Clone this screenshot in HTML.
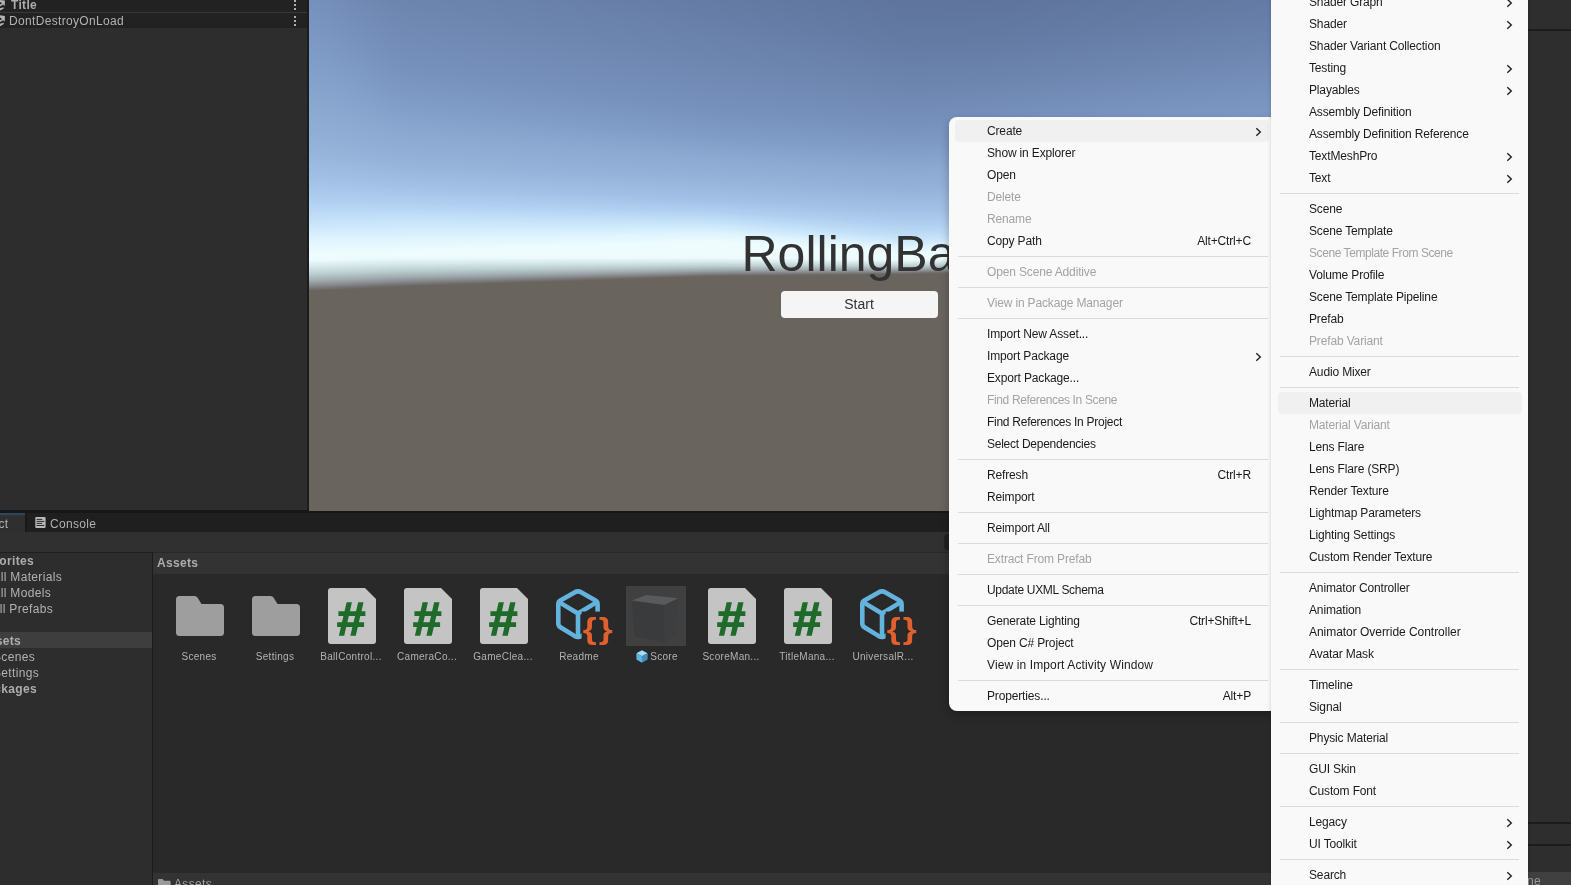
<!DOCTYPE html>
<html lang="en">
<head>
<meta charset="utf-8">
<title>Unity Editor - Create Material</title>
<style>
*{box-sizing:border-box;margin:0;padding:0}
html,body{width:1571px;height:885px;overflow:hidden;background:#2d2d2d;font-family:"Liberation Sans",sans-serif;}
#root{position:relative;width:1571px;height:885px;overflow:hidden;background:#2d2d2d;will-change:transform}
.abs{position:absolute}
.ut{position:absolute;white-space:nowrap;color:#b2b2b2;font-size:12px;line-height:16px;height:16px;letter-spacing:0.33px}
.utb{font-weight:bold;color:#adadad}
.rt{text-align:right;left:-200px}
#hier{left:0;top:0;width:308px;height:511px;background:#2d2d2d}
#band{left:0;top:510px;width:1571px;height:3px;background:#171717;z-index:0}
#game{left:309px;top:0;width:1219px;height:511px;overflow:hidden;background:#6a645f;z-index:1}
#sky{left:-100px;top:-60px;width:1300px;height:680px;transform-origin:100px 349px;transform:rotate(-1.3deg);
 background:linear-gradient(180deg,#6480ab 60px,#6f8ab5 110px,#7f9ac2 160px,#93afd6 210px,#a4c0e4 240px,#c3e0f7 280px,#e0f4fd 305px,#f5fdff 321px,#eff7f9 330px,#c9d4d8 337px,#8f9496 343px,#706b68 348px,#6a645f 353px,#69635e 680px)}
#title{left:432.5px;top:226px;font-size:50px;line-height:56px;color:#323232;white-space:nowrap}
#startbtn{left:471.5px;top:290.5px;width:157px;height:27px;background:#f5f5f5;border-radius:4px;text-align:center;font-size:14px;line-height:27px;color:#323232}
#tabbar{left:0;top:513px;width:1571px;height:19px;background:#1f1f1f}
#toolbar{left:0;top:532px;width:1571px;height:20px;background:#303030}
#ptree{left:0;top:552px;width:152px;height:333px;background:#2d2d2d;overflow:hidden}
#pgrid{left:153px;top:552px;width:1375px;height:333px;background:#292929;overflow:hidden}
#insp{z-index:2;left:1527px;top:0;width:44px;height:885px;background:#2e2e2e}
.menu{position:absolute;z-index:10;box-shadow:0 4px 10px rgba(0,0,0,0.28);background:#f9f9f9;color:#1b1b1b;font-size:12px;letter-spacing:-0.15px}
.m2{box-shadow:0 0 4px rgba(0,0,0,0.18)}
.mi{position:absolute;left:0;right:0;height:22px;line-height:23px;white-space:nowrap}
.mi .l{position:absolute;top:0}
.mi .r{position:absolute;top:0;text-align:right}
.dis{color:#a3a3a3}
.sep{position:absolute;height:1px;background:#dadada}
.hl{position:absolute;background:#f0f0f0;border-radius:4px}
.chev{position:absolute}
.lbl{position:absolute;white-space:nowrap;color:#b2b2b2;font-size:10px;line-height:14px;text-align:center;width:76px;letter-spacing:0.3px}
</style>
</head>
<body>
<div id="root">

<div id="hier" class="abs">
  <div class="abs" style="left:0;top:0;width:308px;height:12px;background:#222"></div>
  <div class="abs" style="left:0;top:12px;width:308px;height:1px;background:#383838"></div>
  <div class="abs" style="left:0;top:13px;width:308px;height:15px;background:#222"></div>
  <div class="ut utb" style="left:11px;top:-3px">Title</div>
  <div class="ut" style="left:9px;top:13px">DontDestroyOnLoad</div>
  <svg class="abs" style="left:0;top:0" width="6" height="28" viewBox="0 0 6 28"><g fill="#b4b4b4">
    <path d="M0,0 L4.9,0.6 L4.7,6.2 L3.3,4.6 L0,6.4 L0,4.6 L2.2,3.3 L0,2 Z"/><path d="M0,8.2 L3.6,7.2 L3.9,8.4 L0,10.6 Z"/>
    <path d="M0,15.2 L4.9,15.9 L4.7,21.8 L3.3,20.2 L0,22 L0,20.2 L2.2,18.9 L0,17.6 Z"/><path d="M0,23.8 L3.6,22.8 L3.9,24 L0,26.2 Z"/></g></svg>
  <div class="abs" style="left:294px;top:0px;width:2px;height:2px;background:#b0b0b0"></div><div class="abs" style="left:294px;top:4px;width:2px;height:2px;background:#b0b0b0"></div><div class="abs" style="left:294px;top:8px;width:2px;height:2px;background:#b0b0b0"></div><div class="abs" style="left:294px;top:16px;width:2px;height:2px;background:#b0b0b0"></div><div class="abs" style="left:294px;top:20px;width:2px;height:2px;background:#b0b0b0"></div><div class="abs" style="left:294px;top:24px;width:2px;height:2px;background:#b0b0b0"></div>
  <div class="abs" style="left:307px;top:0;width:2px;height:511px;background:#1c1c1c"></div>
</div>

<div id="game" class="abs">
  <svg width="0" height="0" style="position:absolute"><filter id="hb" x="0" y="0" width="100%" height="100%" color-interpolation-filters="sRGB"><feGaussianBlur stdDeviation="9 0"/></filter></svg>
  <div class="abs" style="left:-48px;top:0;width:1315px;height:320px;filter:url(#hb)">
  <div class="abs" style="left:0px;top:0;width:16px;height:320px;background:linear-gradient(180.00deg,#5a6f96 -330.0px,#5e749c -230.0px,#647ba4 -130.0px,#6c85af -60.0px,#7691bc 0.0px,#809dc7 58.0px,#8caad2 116.0px,#96b3da 150.5px,#a3c1e6 180.5px,#b0cff0 200.5px,#c4e1f9 220.5px,#e0f5fe 240.5px,#eefcfe 254.8px,#edfbfc 260.3px,#d7e8eb 266.8px,#becfd2 273.8px,#a0acaf 280.8px,#878a8c 285.8px,#706c6a 289.8px,#6a645f 291.3px)"></div>
<div class="abs" style="left:16px;top:0;width:16px;height:320px;background:linear-gradient(180.00deg,#5a6f96 -330.0px,#5e749c -230.0px,#647ba4 -130.0px,#6c85af -60.0px,#7691bc 0.0px,#809dc7 58.0px,#8caad2 116.0px,#96b3da 150.5px,#a3c1e6 180.5px,#b0cff0 200.5px,#c4e1f9 220.5px,#e0f5fe 240.5px,#eefcfe 254.8px,#edfbfc 260.3px,#d7e8eb 266.8px,#becfd2 273.8px,#a0acaf 280.8px,#878a8c 285.8px,#706c6a 289.8px,#6a645f 291.3px)"></div>
<div class="abs" style="left:32px;top:0;width:16px;height:320px;background:linear-gradient(180.00deg,#5a6f96 -330.0px,#5e749c -230.0px,#647ba4 -130.0px,#6c85af -60.0px,#7691bc 0.0px,#809dc7 58.0px,#8caad2 116.0px,#96b3da 150.5px,#a3c1e6 180.5px,#b0cff0 200.5px,#c4e1f9 220.5px,#e0f5fe 240.5px,#eefcfe 254.8px,#edfbfc 260.3px,#d7e8eb 266.8px,#becfd2 273.8px,#a0acaf 280.8px,#878a8c 285.8px,#706c6a 289.8px,#6a645f 291.3px)"></div>
<div class="abs" style="left:48px;top:0;width:16px;height:320px;background:linear-gradient(177.14deg,#5a6f96 -323.0px,#5e749c -223.8px,#647ba4 -125.3px,#6c85af -55.3px,#7691bc 5.3px,#809dc7 61.7px,#8caad2 117.7px,#96b3da 151.6px,#a3c1e6 181.0px,#b0cff0 200.7px,#c4e1f9 220.3px,#e0f5fe 240.5px,#eefcfe 254.6px,#edfbfc 260.1px,#d7e8eb 266.6px,#becfd2 273.5px,#a0acaf 280.5px,#878a8c 285.5px,#706c6a 289.5px,#6a645f 290.9px)"></div>
<div class="abs" style="left:64px;top:0;width:16px;height:320px;background:linear-gradient(177.14deg,#5a6f96 -307.0px,#5e749c -209.6px,#647ba4 -114.7px,#6c85af -44.7px,#7691bc 17.4px,#809dc7 70.0px,#8caad2 121.6px,#96b3da 154.2px,#a3c1e6 182.2px,#b0cff0 201.1px,#c4e1f9 219.9px,#e0f5fe 240.4px,#eefcfe 254.1px,#edfbfc 259.6px,#d7e8eb 266.1px,#becfd2 273.0px,#a0acaf 279.8px,#878a8c 284.8px,#706c6a 288.7px,#6a645f 290.2px)"></div>
<div class="abs" style="left:80px;top:0;width:16px;height:320px;background:linear-gradient(177.14deg,#5a6f96 -291.0px,#5e749c -195.3px,#647ba4 -104.0px,#6c85af -34.0px,#7691bc 29.5px,#809dc7 78.4px,#8caad2 125.5px,#96b3da 156.8px,#a3c1e6 183.3px,#b0cff0 201.6px,#c4e1f9 219.4px,#e0f5fe 240.3px,#eefcfe 253.6px,#edfbfc 259.1px,#d7e8eb 265.6px,#becfd2 272.4px,#a0acaf 279.2px,#878a8c 284.0px,#706c6a 287.9px,#6a645f 289.4px)"></div>
<div class="abs" style="left:96px;top:0;width:16px;height:320px;background:linear-gradient(177.14deg,#5a6f96 -275.0px,#5e749c -181.1px,#647ba4 -93.3px,#6c85af -23.3px,#7691bc 41.6px,#809dc7 86.7px,#8caad2 129.4px,#96b3da 159.4px,#a3c1e6 184.5px,#b0cff0 202.0px,#c4e1f9 219.0px,#e0f5fe 240.2px,#eefcfe 253.1px,#edfbfc 258.6px,#d7e8eb 265.1px,#becfd2 271.8px,#a0acaf 278.5px,#878a8c 283.3px,#706c6a 287.1px,#6a645f 288.6px)"></div>
<div class="abs" style="left:112px;top:0;width:16px;height:320px;background:linear-gradient(177.14deg,#5a6f96 -259.0px,#5e749c -166.9px,#647ba4 -82.7px,#6c85af -12.7px,#7691bc 53.6px,#809dc7 95.1px,#8caad2 133.4px,#96b3da 161.9px,#a3c1e6 185.6px,#b0cff0 202.5px,#c4e1f9 218.5px,#e0f5fe 240.1px,#eefcfe 252.6px,#edfbfc 258.1px,#d7e8eb 264.6px,#becfd2 271.2px,#a0acaf 277.8px,#878a8c 282.6px,#706c6a 286.3px,#6a645f 287.8px)"></div>
<div class="abs" style="left:128px;top:0;width:16px;height:320px;background:linear-gradient(177.14deg,#5a6f96 -243.0px,#5e749c -152.7px,#647ba4 -72.0px,#6c85af -2.0px,#7691bc 65.7px,#809dc7 103.4px,#8caad2 137.3px,#96b3da 164.5px,#a3c1e6 186.8px,#b0cff0 202.9px,#c4e1f9 218.1px,#e0f5fe 240.0px,#eefcfe 252.1px,#edfbfc 257.6px,#d7e8eb 264.1px,#becfd2 270.6px,#a0acaf 277.1px,#878a8c 281.8px,#706c6a 285.5px,#6a645f 286.9px)"></div>
<div class="abs" style="left:144px;top:0;width:16px;height:320px;background:linear-gradient(178.18deg,#5a6f96 -235.0px,#5e749c -146.3px,#647ba4 -67.1px,#6c85af 2.3px,#7691bc 69.7px,#809dc7 106.4px,#8caad2 138.9px,#96b3da 165.7px,#a3c1e6 187.6px,#b0cff0 203.4px,#c4e1f9 218.1px,#e0f5fe 239.8px,#eefcfe 251.6px,#edfbfc 257.5px,#d7e8eb 263.9px,#becfd2 270.3px,#a0acaf 276.7px,#878a8c 281.3px,#706c6a 285.0px,#6a645f 286.4px)"></div>
<div class="abs" style="left:160px;top:0;width:16px;height:320px;background:linear-gradient(178.18deg,#5a6f96 -229.0px,#5e749c -141.7px,#647ba4 -63.6px,#6c85af 5.1px,#7691bc 71.9px,#809dc7 108.0px,#8caad2 140.0px,#96b3da 166.5px,#a3c1e6 188.3px,#b0cff0 203.8px,#c4e1f9 218.3px,#e0f5fe 239.4px,#eefcfe 251.1px,#edfbfc 257.5px,#d7e8eb 263.8px,#becfd2 270.1px,#a0acaf 276.4px,#878a8c 280.9px,#706c6a 284.5px,#6a645f 285.9px)"></div>
<div class="abs" style="left:176px;top:0;width:16px;height:320px;background:linear-gradient(178.18deg,#5a6f96 -222.9px,#5e749c -137.1px,#647ba4 -60.0px,#6c85af 7.9px,#7691bc 74.0px,#809dc7 109.7px,#8caad2 141.1px,#96b3da 167.3px,#a3c1e6 189.0px,#b0cff0 204.2px,#c4e1f9 218.5px,#e0f5fe 239.1px,#eefcfe 250.6px,#edfbfc 257.6px,#d7e8eb 263.7px,#becfd2 269.9px,#a0acaf 276.0px,#878a8c 280.5px,#706c6a 284.0px,#6a645f 285.4px)"></div>
<div class="abs" style="left:192px;top:0;width:16px;height:320px;background:linear-gradient(178.18deg,#5a6f96 -216.8px,#5e749c -132.6px,#647ba4 -56.4px,#6c85af 10.7px,#7691bc 76.1px,#809dc7 111.4px,#8caad2 142.3px,#96b3da 168.1px,#a3c1e6 189.7px,#b0cff0 204.6px,#c4e1f9 218.7px,#e0f5fe 238.8px,#eefcfe 250.1px,#edfbfc 257.6px,#d7e8eb 263.6px,#becfd2 269.6px,#a0acaf 275.6px,#878a8c 280.0px,#706c6a 283.5px,#6a645f 284.9px)"></div>
<div class="abs" style="left:208px;top:0;width:16px;height:320px;background:linear-gradient(178.18deg,#5a6f96 -210.7px,#5e749c -128.0px,#647ba4 -52.9px,#6c85af 13.4px,#7691bc 78.3px,#809dc7 113.1px,#8caad2 143.4px,#96b3da 168.9px,#a3c1e6 190.4px,#b0cff0 205.1px,#c4e1f9 218.9px,#e0f5fe 238.5px,#eefcfe 249.6px,#edfbfc 257.6px,#d7e8eb 263.5px,#becfd2 269.4px,#a0acaf 275.3px,#878a8c 279.6px,#706c6a 283.0px,#6a645f 284.4px)"></div>
<div class="abs" style="left:224px;top:0;width:16px;height:320px;background:linear-gradient(178.18deg,#5a6f96 -204.6px,#5e749c -123.4px,#647ba4 -49.3px,#6c85af 16.2px,#7691bc 80.4px,#809dc7 114.7px,#8caad2 144.5px,#96b3da 169.7px,#a3c1e6 191.1px,#b0cff0 205.5px,#c4e1f9 219.1px,#e0f5fe 238.2px,#eefcfe 249.0px,#edfbfc 257.6px,#d7e8eb 263.4px,#becfd2 269.2px,#a0acaf 274.9px,#878a8c 279.1px,#706c6a 282.5px,#6a645f 283.8px)"></div>
<div class="abs" style="left:240px;top:0;width:16px;height:320px;background:linear-gradient(178.18deg,#5a6f96 -198.5px,#5e749c -118.9px,#647ba4 -45.8px,#6c85af 19.0px,#7691bc 82.5px,#809dc7 116.4px,#8caad2 145.6px,#96b3da 170.5px,#a3c1e6 191.8px,#b0cff0 205.9px,#c4e1f9 219.2px,#e0f5fe 237.9px,#eefcfe 248.5px,#edfbfc 257.7px,#d7e8eb 263.3px,#becfd2 268.9px,#a0acaf 274.6px,#878a8c 278.7px,#706c6a 282.0px,#6a645f 283.3px)"></div>
<div class="abs" style="left:256px;top:0;width:16px;height:320px;background:linear-gradient(178.18deg,#5a6f96 -192.4px,#5e749c -114.3px,#647ba4 -42.2px,#6c85af 21.8px,#7691bc 84.7px,#809dc7 118.1px,#8caad2 146.7px,#96b3da 171.3px,#a3c1e6 192.6px,#b0cff0 206.4px,#c4e1f9 219.4px,#e0f5fe 237.6px,#eefcfe 248.0px,#edfbfc 257.7px,#d7e8eb 263.2px,#becfd2 268.7px,#a0acaf 274.2px,#878a8c 278.2px,#706c6a 281.5px,#6a645f 282.8px)"></div>
<div class="abs" style="left:272px;top:0;width:16px;height:320px;background:linear-gradient(178.18deg,#5a6f96 -186.3px,#5e749c -109.7px,#647ba4 -38.7px,#6c85af 24.6px,#7691bc 86.8px,#809dc7 119.8px,#8caad2 147.8px,#96b3da 172.2px,#a3c1e6 193.3px,#b0cff0 206.8px,#c4e1f9 219.6px,#e0f5fe 237.3px,#eefcfe 247.5px,#edfbfc 257.7px,#d7e8eb 263.1px,#becfd2 268.5px,#a0acaf 273.9px,#878a8c 277.8px,#706c6a 281.0px,#6a645f 282.3px)"></div>
<div class="abs" style="left:288px;top:0;width:16px;height:320px;background:linear-gradient(178.18deg,#5a6f96 -180.2px,#5e749c -105.1px,#647ba4 -35.1px,#6c85af 27.4px,#7691bc 88.9px,#809dc7 121.4px,#8caad2 149.0px,#96b3da 173.0px,#a3c1e6 194.0px,#b0cff0 207.2px,#c4e1f9 219.8px,#e0f5fe 237.0px,#eefcfe 247.0px,#edfbfc 257.7px,#d7e8eb 263.0px,#becfd2 268.3px,#a0acaf 273.5px,#878a8c 277.4px,#706c6a 280.5px,#6a645f 281.8px)"></div>
<div class="abs" style="left:304px;top:0;width:16px;height:320px;background:linear-gradient(178.18deg,#5a6f96 -174.1px,#5e749c -100.6px,#647ba4 -31.6px,#6c85af 30.2px,#7691bc 91.1px,#809dc7 123.1px,#8caad2 150.1px,#96b3da 173.8px,#a3c1e6 194.7px,#b0cff0 207.7px,#c4e1f9 220.0px,#e0f5fe 236.7px,#eefcfe 246.5px,#edfbfc 257.8px,#d7e8eb 262.9px,#becfd2 268.0px,#a0acaf 273.2px,#878a8c 276.9px,#706c6a 280.0px,#6a645f 281.3px)"></div>
<div class="abs" style="left:320px;top:0;width:16px;height:320px;background:linear-gradient(178.18deg,#5a6f96 -168.0px,#5e749c -96.0px,#647ba4 -28.0px,#6c85af 33.0px,#7691bc 93.2px,#809dc7 124.8px,#8caad2 151.2px,#96b3da 174.6px,#a3c1e6 195.4px,#b0cff0 208.1px,#c4e1f9 220.2px,#e0f5fe 236.4px,#eefcfe 246.0px,#edfbfc 257.8px,#d7e8eb 262.8px,#becfd2 267.8px,#a0acaf 272.8px,#878a8c 276.5px,#706c6a 279.5px,#6a645f 280.8px)"></div>
<div class="abs" style="left:336px;top:0;width:16px;height:320px;background:linear-gradient(178.18deg,#5a6f96 -161.9px,#5e749c -91.4px,#647ba4 -24.4px,#6c85af 35.8px,#7691bc 95.3px,#809dc7 126.5px,#8caad2 152.3px,#96b3da 175.4px,#a3c1e6 196.1px,#b0cff0 208.5px,#c4e1f9 220.3px,#e0f5fe 236.1px,#eefcfe 245.5px,#edfbfc 257.8px,#d7e8eb 262.7px,#becfd2 267.6px,#a0acaf 272.4px,#878a8c 276.0px,#706c6a 279.0px,#6a645f 280.3px)"></div>
<div class="abs" style="left:352px;top:0;width:16px;height:320px;background:linear-gradient(178.18deg,#5a6f96 -155.8px,#5e749c -86.9px,#647ba4 -20.9px,#6c85af 38.6px,#7691bc 97.5px,#809dc7 128.2px,#8caad2 153.4px,#96b3da 176.2px,#a3c1e6 196.8px,#b0cff0 209.0px,#c4e1f9 220.5px,#e0f5fe 235.8px,#eefcfe 245.0px,#edfbfc 257.9px,#d7e8eb 262.6px,#becfd2 267.3px,#a0acaf 272.1px,#878a8c 275.6px,#706c6a 278.5px,#6a645f 279.8px)"></div>
<div class="abs" style="left:368px;top:0;width:16px;height:320px;background:linear-gradient(178.18deg,#5a6f96 -149.7px,#5e749c -82.3px,#647ba4 -17.3px,#6c85af 41.4px,#7691bc 99.6px,#809dc7 129.8px,#8caad2 154.6px,#96b3da 177.0px,#a3c1e6 197.5px,#b0cff0 209.4px,#c4e1f9 220.7px,#e0f5fe 235.5px,#eefcfe 244.5px,#edfbfc 257.9px,#d7e8eb 262.5px,#becfd2 267.1px,#a0acaf 271.7px,#878a8c 275.2px,#706c6a 278.0px,#6a645f 279.3px)"></div>
<div class="abs" style="left:384px;top:0;width:16px;height:320px;background:linear-gradient(178.18deg,#5a6f96 -143.6px,#5e749c -77.7px,#647ba4 -13.8px,#6c85af 44.2px,#7691bc 101.7px,#809dc7 131.5px,#8caad2 155.7px,#96b3da 177.9px,#a3c1e6 198.2px,#b0cff0 209.8px,#c4e1f9 220.9px,#e0f5fe 235.2px,#eefcfe 244.0px,#edfbfc 257.9px,#d7e8eb 262.4px,#becfd2 266.9px,#a0acaf 271.4px,#878a8c 274.7px,#706c6a 277.4px,#6a645f 278.8px)"></div>
<div class="abs" style="left:400px;top:0;width:16px;height:320px;background:linear-gradient(178.18deg,#5a6f96 -137.5px,#5e749c -73.1px,#647ba4 -10.2px,#6c85af 47.0px,#7691bc 103.9px,#809dc7 133.2px,#8caad2 156.8px,#96b3da 178.7px,#a3c1e6 199.0px,#b0cff0 210.3px,#c4e1f9 221.1px,#e0f5fe 234.9px,#eefcfe 243.5px,#edfbfc 257.9px,#d7e8eb 262.3px,#becfd2 266.7px,#a0acaf 271.0px,#878a8c 274.3px,#706c6a 276.9px,#6a645f 278.3px)"></div>
<div class="abs" style="left:416px;top:0;width:16px;height:320px;background:linear-gradient(178.18deg,#5a6f96 -131.4px,#5e749c -68.6px,#647ba4 -6.7px,#6c85af 49.8px,#7691bc 106.0px,#809dc7 134.9px,#8caad2 157.9px,#96b3da 179.5px,#a3c1e6 199.7px,#b0cff0 210.7px,#c4e1f9 221.3px,#e0f5fe 234.6px,#eefcfe 243.0px,#edfbfc 258.0px,#d7e8eb 262.2px,#becfd2 266.4px,#a0acaf 270.7px,#878a8c 273.8px,#706c6a 276.4px,#6a645f 277.8px)"></div>
<div class="abs" style="left:432px;top:0;width:16px;height:320px;background:linear-gradient(178.18deg,#5a6f96 -125.3px,#5e749c -64.0px,#647ba4 -3.1px,#6c85af 52.6px,#7691bc 108.1px,#809dc7 136.5px,#8caad2 159.0px,#96b3da 180.3px,#a3c1e6 200.4px,#b0cff0 211.1px,#c4e1f9 221.4px,#e0f5fe 234.3px,#eefcfe 242.4px,#edfbfc 258.0px,#d7e8eb 262.1px,#becfd2 266.2px,#a0acaf 270.3px,#878a8c 273.4px,#706c6a 275.9px,#6a645f 277.2px)"></div>
<div class="abs" style="left:448px;top:0;width:16px;height:320px;background:linear-gradient(179.38deg,#5a6f96 -119.3px,#5e749c -59.4px,#647ba4 0.5px,#6c85af 55.3px,#7691bc 110.2px,#809dc7 138.1px,#8caad2 160.1px,#96b3da 181.1px,#a3c1e6 201.1px,#b0cff0 211.6px,#c4e1f9 221.8px,#e0f5fe 234.1px,#eefcfe 242.1px,#edfbfc 258.0px,#d7e8eb 262.0px,#becfd2 266.0px,#a0acaf 270.0px,#878a8c 273.0px,#706c6a 275.5px,#6a645f 276.8px)"></div>
<div class="abs" style="left:464px;top:0;width:16px;height:320px;background:linear-gradient(179.38deg,#5a6f96 -113.5px,#5e749c -54.5px,#647ba4 4.2px,#6c85af 57.8px,#7691bc 111.4px,#809dc7 139.1px,#8caad2 161.1px,#96b3da 182.0px,#a3c1e6 201.9px,#b0cff0 212.7px,#c4e1f9 223.1px,#e0f5fe 235.3px,#eefcfe 243.1px,#edfbfc 258.2px,#d7e8eb 262.1px,#becfd2 266.0px,#a0acaf 269.9px,#878a8c 272.9px,#706c6a 275.3px,#6a645f 276.6px)"></div>
<div class="abs" style="left:480px;top:0;width:16px;height:320px;background:linear-gradient(179.38deg,#5a6f96 -107.8px,#5e749c -49.5px,#647ba4 7.8px,#6c85af 60.2px,#7691bc 112.6px,#809dc7 140.1px,#8caad2 162.1px,#96b3da 182.9px,#a3c1e6 202.7px,#b0cff0 213.9px,#c4e1f9 224.5px,#e0f5fe 236.4px,#eefcfe 244.1px,#edfbfc 258.3px,#d7e8eb 262.2px,#becfd2 266.0px,#a0acaf 269.8px,#878a8c 272.7px,#706c6a 275.2px,#6a645f 276.4px)"></div>
<div class="abs" style="left:496px;top:0;width:16px;height:320px;background:linear-gradient(179.38deg,#5a6f96 -102.1px,#5e749c -44.6px,#647ba4 11.5px,#6c85af 62.7px,#7691bc 113.8px,#809dc7 141.1px,#8caad2 163.1px,#96b3da 183.8px,#a3c1e6 203.6px,#b0cff0 215.0px,#c4e1f9 225.8px,#e0f5fe 237.6px,#eefcfe 245.1px,#edfbfc 258.5px,#d7e8eb 262.3px,#becfd2 266.0px,#a0acaf 269.7px,#878a8c 272.6px,#706c6a 275.0px,#6a645f 276.3px)"></div>
<div class="abs" style="left:512px;top:0;width:16px;height:320px;background:linear-gradient(179.38deg,#5a6f96 -96.3px,#5e749c -39.7px,#647ba4 15.2px,#6c85af 65.2px,#7691bc 115.1px,#809dc7 142.1px,#8caad2 164.1px,#96b3da 184.7px,#a3c1e6 204.4px,#b0cff0 216.1px,#c4e1f9 227.2px,#e0f5fe 238.7px,#eefcfe 246.1px,#edfbfc 258.7px,#d7e8eb 262.3px,#becfd2 266.0px,#a0acaf 269.7px,#878a8c 272.5px,#706c6a 274.8px,#6a645f 276.1px)"></div>
<div class="abs" style="left:528px;top:0;width:16px;height:320px;background:linear-gradient(179.38deg,#5a6f96 -90.6px,#5e749c -34.8px,#647ba4 18.9px,#6c85af 67.6px,#7691bc 116.3px,#809dc7 143.0px,#8caad2 165.0px,#96b3da 185.6px,#a3c1e6 205.2px,#b0cff0 217.2px,#c4e1f9 228.5px,#e0f5fe 239.9px,#eefcfe 247.0px,#edfbfc 258.8px,#d7e8eb 262.4px,#becfd2 266.0px,#a0acaf 269.6px,#878a8c 272.4px,#706c6a 274.7px,#6a645f 275.9px)"></div>
<div class="abs" style="left:544px;top:0;width:16px;height:320px;background:linear-gradient(179.38deg,#5a6f96 -84.8px,#5e749c -29.8px,#647ba4 22.6px,#6c85af 70.1px,#7691bc 117.5px,#809dc7 144.0px,#8caad2 166.0px,#96b3da 186.5px,#a3c1e6 206.0px,#b0cff0 218.3px,#c4e1f9 229.8px,#e0f5fe 241.0px,#eefcfe 248.0px,#edfbfc 259.0px,#d7e8eb 262.5px,#becfd2 266.0px,#a0acaf 269.5px,#878a8c 272.2px,#706c6a 274.5px,#6a645f 275.7px)"></div>
<div class="abs" style="left:560px;top:0;width:16px;height:320px;background:linear-gradient(179.38deg,#5a6f96 -79.1px,#5e749c -24.9px,#647ba4 26.3px,#6c85af 72.5px,#7691bc 118.8px,#809dc7 145.0px,#8caad2 167.0px,#96b3da 187.4px,#a3c1e6 206.8px,#b0cff0 219.4px,#c4e1f9 231.2px,#e0f5fe 242.2px,#eefcfe 249.0px,#edfbfc 259.2px,#d7e8eb 262.6px,#becfd2 266.0px,#a0acaf 269.4px,#878a8c 272.1px,#706c6a 274.3px,#6a645f 275.6px)"></div>
<div class="abs" style="left:576px;top:0;width:16px;height:320px;background:linear-gradient(179.38deg,#5a6f96 -73.3px,#5e749c -20.0px,#647ba4 30.0px,#6c85af 75.0px,#7691bc 120.0px,#809dc7 146.0px,#8caad2 168.0px,#96b3da 188.3px,#a3c1e6 207.7px,#b0cff0 220.5px,#c4e1f9 232.5px,#e0f5fe 243.3px,#eefcfe 250.0px,#edfbfc 259.3px,#d7e8eb 262.7px,#becfd2 266.0px,#a0acaf 269.3px,#878a8c 272.0px,#706c6a 274.2px,#6a645f 275.4px)"></div>
<div class="abs" style="left:592px;top:0;width:16px;height:320px;background:linear-gradient(179.38deg,#5a6f96 -67.6px,#5e749c -15.1px,#647ba4 33.7px,#6c85af 77.5px,#7691bc 121.2px,#809dc7 147.0px,#8caad2 169.0px,#96b3da 189.2px,#a3c1e6 208.5px,#b0cff0 221.6px,#c4e1f9 233.9px,#e0f5fe 244.5px,#eefcfe 251.0px,#edfbfc 259.5px,#d7e8eb 262.7px,#becfd2 266.0px,#a0acaf 269.3px,#878a8c 271.9px,#706c6a 274.0px,#6a645f 275.2px)"></div>
<div class="abs" style="left:608px;top:0;width:16px;height:320px;background:linear-gradient(179.38deg,#5a6f96 -61.8px,#5e749c -10.2px,#647ba4 37.4px,#6c85af 79.9px,#7691bc 122.5px,#809dc7 148.0px,#8caad2 170.0px,#96b3da 190.1px,#a3c1e6 209.3px,#b0cff0 222.7px,#c4e1f9 235.2px,#e0f5fe 245.6px,#eefcfe 252.0px,#edfbfc 259.7px,#d7e8eb 262.8px,#becfd2 266.0px,#a0acaf 269.2px,#878a8c 271.8px,#706c6a 273.8px,#6a645f 275.1px)"></div>
<div class="abs" style="left:624px;top:0;width:16px;height:320px;background:linear-gradient(179.38deg,#5a6f96 -56.1px,#5e749c -5.2px,#647ba4 41.1px,#6c85af 82.4px,#7691bc 123.7px,#809dc7 149.0px,#8caad2 171.0px,#96b3da 191.0px,#a3c1e6 210.1px,#b0cff0 223.8px,#c4e1f9 236.6px,#e0f5fe 246.8px,#eefcfe 253.0px,#edfbfc 259.8px,#d7e8eb 262.9px,#becfd2 266.0px,#a0acaf 269.1px,#878a8c 271.6px,#706c6a 273.7px,#6a645f 274.9px)"></div>
<div class="abs" style="left:640px;top:0;width:16px;height:320px;background:linear-gradient(179.35deg,#5a6f96 -50.4px,#5e749c -0.3px,#647ba4 44.8px,#6c85af 84.8px,#7691bc 124.9px,#809dc7 149.9px,#8caad2 171.9px,#96b3da 191.9px,#a3c1e6 210.9px,#b0cff0 224.9px,#c4e1f9 237.9px,#e0f5fe 247.9px,#eefcfe 253.9px,#edfbfc 260.0px,#d7e8eb 263.0px,#becfd2 266.0px,#a0acaf 269.0px,#878a8c 271.5px,#706c6a 273.5px,#6a645f 274.7px)"></div>
<div class="abs" style="left:656px;top:0;width:16px;height:320px;background:linear-gradient(179.24deg,#5a6f96 -50.0px,#5e749c 0.0px,#647ba4 44.2px,#6c85af 84.2px,#7691bc 123.5px,#809dc7 148.8px,#8caad2 171.0px,#96b3da 191.3px,#a3c1e6 210.5px,#b0cff0 224.5px,#c4e1f9 237.5px,#e0f5fe 247.5px,#eefcfe 253.5px,#edfbfc 259.5px,#d7e8eb 262.5px,#becfd2 265.5px,#a0acaf 268.5px,#878a8c 271.0px,#706c6a 273.0px,#6a645f 274.5px)"></div>
<div class="abs" style="left:672px;top:0;width:16px;height:320px;background:linear-gradient(179.24deg,#5a6f96 -50.0px,#5e749c 0.0px,#647ba4 43.3px,#6c85af 83.3px,#7691bc 121.9px,#809dc7 147.6px,#8caad2 169.9px,#96b3da 190.6px,#a3c1e6 210.0px,#b0cff0 224.0px,#c4e1f9 237.0px,#e0f5fe 247.0px,#eefcfe 253.0px,#edfbfc 259.0px,#d7e8eb 262.0px,#becfd2 265.0px,#a0acaf 268.0px,#878a8c 270.5px,#706c6a 272.5px,#6a645f 274.3px)"></div>
<div class="abs" style="left:688px;top:0;width:16px;height:320px;background:linear-gradient(179.24deg,#5a6f96 -50.0px,#5e749c 0.0px,#647ba4 42.4px,#6c85af 82.4px,#7691bc 120.3px,#809dc7 146.3px,#8caad2 168.9px,#96b3da 189.9px,#a3c1e6 209.4px,#b0cff0 223.4px,#c4e1f9 236.4px,#e0f5fe 246.4px,#eefcfe 252.4px,#edfbfc 258.4px,#d7e8eb 261.4px,#becfd2 264.4px,#a0acaf 267.4px,#878a8c 269.9px,#706c6a 271.9px,#6a645f 274.1px)"></div>
<div class="abs" style="left:704px;top:0;width:16px;height:320px;background:linear-gradient(179.24deg,#5a6f96 -50.0px,#5e749c 0.0px,#647ba4 41.5px,#6c85af 81.5px,#7691bc 118.7px,#809dc7 145.1px,#8caad2 167.8px,#96b3da 189.2px,#a3c1e6 208.9px,#b0cff0 222.9px,#c4e1f9 235.9px,#e0f5fe 245.9px,#eefcfe 251.9px,#edfbfc 257.9px,#d7e8eb 260.9px,#becfd2 263.9px,#a0acaf 266.9px,#878a8c 269.4px,#706c6a 271.4px,#6a645f 273.9px)"></div>
<div class="abs" style="left:720px;top:0;width:16px;height:320px;background:linear-gradient(179.24deg,#5a6f96 -50.0px,#5e749c 0.0px,#647ba4 40.6px,#6c85af 80.6px,#7691bc 117.1px,#809dc7 143.9px,#8caad2 166.7px,#96b3da 188.5px,#a3c1e6 208.4px,#b0cff0 222.4px,#c4e1f9 235.4px,#e0f5fe 245.4px,#eefcfe 251.4px,#edfbfc 257.4px,#d7e8eb 260.4px,#becfd2 263.4px,#a0acaf 266.4px,#878a8c 268.9px,#706c6a 270.9px,#6a645f 273.6px)"></div>
<div class="abs" style="left:736px;top:0;width:16px;height:320px;background:linear-gradient(179.37deg,#5a6f96 -50.9px,#5e749c -0.9px,#647ba4 39.3px,#6c85af 79.4px,#7691bc 115.5px,#809dc7 142.8px,#8caad2 165.9px,#96b3da 187.9px,#a3c1e6 207.9px,#b0cff0 221.9px,#c4e1f9 234.9px,#e0f5fe 244.9px,#eefcfe 250.9px,#edfbfc 256.9px,#d7e8eb 259.9px,#becfd2 262.9px,#a0acaf 265.9px,#878a8c 268.4px,#706c6a 270.4px,#6a645f 273.4px)"></div>
<div class="abs" style="left:752px;top:0;width:16px;height:320px;background:linear-gradient(179.37deg,#5a6f96 -53.9px,#5e749c -3.9px,#647ba4 36.9px,#6c85af 77.3px,#7691bc 113.8px,#809dc7 142.0px,#8caad2 165.5px,#96b3da 187.6px,#a3c1e6 207.6px,#b0cff0 221.6px,#c4e1f9 234.6px,#e0f5fe 244.6px,#eefcfe 250.6px,#edfbfc 256.6px,#d7e8eb 259.6px,#becfd2 262.6px,#a0acaf 265.6px,#878a8c 268.1px,#706c6a 270.1px,#6a645f 273.3px)"></div>
<div class="abs" style="left:768px;top:0;width:16px;height:320px;background:linear-gradient(179.37deg,#5a6f96 -56.8px,#5e749c -6.8px,#647ba4 34.5px,#6c85af 75.2px,#7691bc 112.2px,#809dc7 141.2px,#8caad2 165.2px,#96b3da 187.3px,#a3c1e6 207.3px,#b0cff0 221.3px,#c4e1f9 234.3px,#e0f5fe 244.3px,#eefcfe 250.3px,#edfbfc 256.3px,#d7e8eb 259.3px,#becfd2 262.3px,#a0acaf 265.3px,#878a8c 267.8px,#706c6a 269.8px,#6a645f 273.1px)"></div>
<div class="abs" style="left:784px;top:0;width:16px;height:320px;background:linear-gradient(179.37deg,#5a6f96 -59.8px,#5e749c -9.8px,#647ba4 32.2px,#6c85af 73.2px,#7691bc 110.5px,#809dc7 140.5px,#8caad2 164.8px,#96b3da 187.0px,#a3c1e6 207.0px,#b0cff0 221.0px,#c4e1f9 234.0px,#e0f5fe 244.0px,#eefcfe 250.0px,#edfbfc 256.0px,#d7e8eb 259.0px,#becfd2 262.0px,#a0acaf 265.0px,#878a8c 267.5px,#706c6a 269.5px,#6a645f 272.9px)"></div>
<div class="abs" style="left:800px;top:0;width:16px;height:320px;background:linear-gradient(179.37deg,#5a6f96 -62.7px,#5e749c -12.7px,#647ba4 29.8px,#6c85af 71.1px,#7691bc 108.9px,#809dc7 139.7px,#8caad2 164.5px,#96b3da 186.7px,#a3c1e6 206.7px,#b0cff0 220.7px,#c4e1f9 233.7px,#e0f5fe 243.7px,#eefcfe 249.7px,#edfbfc 255.7px,#d7e8eb 258.7px,#becfd2 261.7px,#a0acaf 264.7px,#878a8c 267.2px,#706c6a 269.2px,#6a645f 272.7px)"></div>
<div class="abs" style="left:816px;top:0;width:16px;height:320px;background:linear-gradient(179.37deg,#5a6f96 -65.7px,#5e749c -15.7px,#647ba4 27.5px,#6c85af 69.0px,#7691bc 107.2px,#809dc7 138.9px,#8caad2 164.1px,#96b3da 186.4px,#a3c1e6 206.4px,#b0cff0 220.4px,#c4e1f9 233.4px,#e0f5fe 243.4px,#eefcfe 249.4px,#edfbfc 255.4px,#d7e8eb 258.4px,#becfd2 261.4px,#a0acaf 264.4px,#878a8c 266.9px,#706c6a 268.9px,#6a645f 272.6px)"></div>
<div class="abs" style="left:832px;top:0;width:16px;height:320px;background:linear-gradient(179.37deg,#5a6f96 -68.6px,#5e749c -18.6px,#647ba4 25.1px,#6c85af 67.0px,#7691bc 105.6px,#809dc7 138.2px,#8caad2 163.8px,#96b3da 186.1px,#a3c1e6 206.1px,#b0cff0 220.1px,#c4e1f9 233.1px,#e0f5fe 243.1px,#eefcfe 249.1px,#edfbfc 255.1px,#d7e8eb 258.1px,#becfd2 261.1px,#a0acaf 264.1px,#878a8c 266.6px,#706c6a 268.6px,#6a645f 272.4px)"></div>
<div class="abs" style="left:848px;top:0;width:16px;height:320px;background:linear-gradient(179.37deg,#5a6f96 -71.6px,#5e749c -21.6px,#647ba4 22.7px,#6c85af 64.9px,#7691bc 103.9px,#809dc7 137.4px,#8caad2 163.4px,#96b3da 185.8px,#a3c1e6 205.8px,#b0cff0 219.8px,#c4e1f9 232.8px,#e0f5fe 242.8px,#eefcfe 248.8px,#edfbfc 254.8px,#d7e8eb 257.8px,#becfd2 260.8px,#a0acaf 263.8px,#878a8c 266.3px,#706c6a 268.3px,#6a645f 272.2px)"></div>
<div class="abs" style="left:864px;top:0;width:16px;height:320px;background:linear-gradient(179.37deg,#5a6f96 -74.5px,#5e749c -24.5px,#647ba4 20.4px,#6c85af 62.8px,#7691bc 102.3px,#809dc7 136.6px,#8caad2 163.1px,#96b3da 185.5px,#a3c1e6 205.5px,#b0cff0 219.5px,#c4e1f9 232.5px,#e0f5fe 242.5px,#eefcfe 248.5px,#edfbfc 254.5px,#d7e8eb 257.5px,#becfd2 260.5px,#a0acaf 263.5px,#878a8c 266.0px,#706c6a 268.0px,#6a645f 272.0px)"></div>
<div class="abs" style="left:880px;top:0;width:16px;height:320px;background:linear-gradient(179.37deg,#5a6f96 -77.5px,#5e749c -27.5px,#647ba4 18.0px,#6c85af 60.8px,#7691bc 100.6px,#809dc7 135.9px,#8caad2 162.7px,#96b3da 185.3px,#a3c1e6 205.3px,#b0cff0 219.3px,#c4e1f9 232.3px,#e0f5fe 242.3px,#eefcfe 248.3px,#edfbfc 254.3px,#d7e8eb 257.3px,#becfd2 260.3px,#a0acaf 263.3px,#878a8c 265.8px,#706c6a 267.8px,#6a645f 271.9px)"></div>
<div class="abs" style="left:896px;top:0;width:16px;height:320px;background:linear-gradient(179.37deg,#5a6f96 -80.4px,#5e749c -30.4px,#647ba4 15.6px,#6c85af 58.7px,#7691bc 99.0px,#809dc7 135.1px,#8caad2 162.3px,#96b3da 185.0px,#a3c1e6 205.0px,#b0cff0 219.0px,#c4e1f9 232.0px,#e0f5fe 242.0px,#eefcfe 248.0px,#edfbfc 254.0px,#d7e8eb 257.0px,#becfd2 260.0px,#a0acaf 263.0px,#878a8c 265.5px,#706c6a 267.5px,#6a645f 271.7px)"></div>
<div class="abs" style="left:912px;top:0;width:16px;height:320px;background:linear-gradient(179.37deg,#5a6f96 -83.4px,#5e749c -33.4px,#647ba4 13.3px,#6c85af 56.6px,#7691bc 97.3px,#809dc7 134.3px,#8caad2 162.0px,#96b3da 184.7px,#a3c1e6 204.7px,#b0cff0 218.7px,#c4e1f9 231.7px,#e0f5fe 241.7px,#eefcfe 247.7px,#edfbfc 253.7px,#d7e8eb 256.7px,#becfd2 259.7px,#a0acaf 262.7px,#878a8c 265.2px,#706c6a 267.2px,#6a645f 271.5px)"></div>
<div class="abs" style="left:928px;top:0;width:16px;height:320px;background:linear-gradient(179.37deg,#5a6f96 -86.3px,#5e749c -36.3px,#647ba4 10.9px,#6c85af 54.6px,#7691bc 95.6px,#809dc7 133.5px,#8caad2 161.6px,#96b3da 184.4px,#a3c1e6 204.4px,#b0cff0 218.4px,#c4e1f9 231.4px,#e0f5fe 241.4px,#eefcfe 247.4px,#edfbfc 253.4px,#d7e8eb 256.4px,#becfd2 259.4px,#a0acaf 262.4px,#878a8c 264.9px,#706c6a 266.9px,#6a645f 271.3px)"></div>
<div class="abs" style="left:944px;top:0;width:16px;height:320px;background:linear-gradient(179.37deg,#5a6f96 -89.3px,#5e749c -39.3px,#647ba4 8.6px,#6c85af 52.5px,#7691bc 94.0px,#809dc7 132.8px,#8caad2 161.3px,#96b3da 184.1px,#a3c1e6 204.1px,#b0cff0 218.1px,#c4e1f9 231.1px,#e0f5fe 241.1px,#eefcfe 247.1px,#edfbfc 253.1px,#d7e8eb 256.1px,#becfd2 259.1px,#a0acaf 262.1px,#878a8c 264.6px,#706c6a 266.6px,#6a645f 271.1px)"></div>
<div class="abs" style="left:960px;top:0;width:16px;height:320px;background:linear-gradient(179.37deg,#5a6f96 -92.3px,#5e749c -42.3px,#647ba4 6.2px,#6c85af 50.4px,#7691bc 92.3px,#809dc7 132.0px,#8caad2 160.9px,#96b3da 183.8px,#a3c1e6 203.8px,#b0cff0 217.8px,#c4e1f9 230.8px,#e0f5fe 240.8px,#eefcfe 246.8px,#edfbfc 252.8px,#d7e8eb 255.8px,#becfd2 258.8px,#a0acaf 261.8px,#878a8c 264.3px,#706c6a 266.3px,#6a645f 271.0px)"></div>
<div class="abs" style="left:976px;top:0;width:16px;height:320px;background:linear-gradient(179.37deg,#5a6f96 -95.2px,#5e749c -45.2px,#647ba4 3.8px,#6c85af 48.4px,#7691bc 90.7px,#809dc7 131.2px,#8caad2 160.6px,#96b3da 183.5px,#a3c1e6 203.5px,#b0cff0 217.5px,#c4e1f9 230.5px,#e0f5fe 240.5px,#eefcfe 246.5px,#edfbfc 252.5px,#d7e8eb 255.5px,#becfd2 258.5px,#a0acaf 261.5px,#878a8c 264.0px,#706c6a 266.0px,#6a645f 270.8px)"></div>
<div class="abs" style="left:992px;top:0;width:16px;height:320px;background:linear-gradient(179.37deg,#5a6f96 -98.2px,#5e749c -48.2px,#647ba4 1.5px,#6c85af 46.3px,#7691bc 89.0px,#809dc7 130.5px,#8caad2 160.2px,#96b3da 183.2px,#a3c1e6 203.2px,#b0cff0 217.2px,#c4e1f9 230.2px,#e0f5fe 240.2px,#eefcfe 246.2px,#edfbfc 252.2px,#d7e8eb 255.2px,#becfd2 258.2px,#a0acaf 261.2px,#878a8c 263.7px,#706c6a 265.7px,#6a645f 270.6px)"></div>
<div class="abs" style="left:1008px;top:0;width:16px;height:320px;background:linear-gradient(180.00deg,#5a6f96 -100.0px,#5e749c -50.0px,#647ba4 0.0px,#6c85af 45.0px,#7691bc 88.0px,#809dc7 130.0px,#8caad2 160.0px,#96b3da 183.0px,#a3c1e6 203.0px,#b0cff0 217.0px,#c4e1f9 230.0px,#e0f5fe 240.0px,#eefcfe 246.0px,#edfbfc 252.0px,#d7e8eb 255.0px,#becfd2 258.0px,#a0acaf 261.0px,#878a8c 263.5px,#706c6a 265.5px,#6a645f 270.5px)"></div>
<div class="abs" style="left:1024px;top:0;width:16px;height:320px;background:linear-gradient(180.00deg,#5a6f96 -100.0px,#5e749c -50.0px,#647ba4 0.0px,#6c85af 45.0px,#7691bc 88.0px,#809dc7 130.0px,#8caad2 160.0px,#96b3da 183.0px,#a3c1e6 203.0px,#b0cff0 217.0px,#c4e1f9 230.0px,#e0f5fe 240.0px,#eefcfe 246.0px,#edfbfc 252.0px,#d7e8eb 255.0px,#becfd2 258.0px,#a0acaf 261.0px,#878a8c 263.5px,#706c6a 265.5px,#6a645f 270.5px)"></div>
  </div>
  <div id="title" class="abs">RollingBall</div>
  <div id="startbtn" class="abs">Start</div>
</div>

<div id="band" class="abs"><div class="abs" style="left:0;top:1px;width:25px;height:2px;background:#0d1a26"></div></div>
<div id="tabbar" class="abs">
  <div class="abs" style="left:0;top:0;width:25px;height:19px;background:linear-gradient(180deg,#3a4c5d 0,#34404b 1.5px,#2f2f2f 3px)"></div>
  <div class="abs" style="left:25px;top:0;width:2px;height:19px;background:#191919"></div>
  <div class="ut rt" style="width:208.5px;top:3px">Project</div>
  <svg class="abs" style="left:34.5px;top:4px" width="11" height="11" viewBox="0 0 11 11"><rect x="0.3" y="0.1" width="10.3" height="10.8" rx="0.8" fill="#b8b8b8"/><g stroke="#1c1c1c" stroke-width="0.9"><path d="M1.6,2.4 H7.2 M1.6,4.4 H9.2 M1.6,6.4 H7.2 M1.6,8.5 H9.2"/></g></svg>
  <div class="ut" style="left:50px;top:3px">Console</div>
</div>
<div id="toolbar" class="abs"><div class="abs" style="left:944px;top:2px;width:6px;height:16px;background:#202020;border-radius:4px 0 0 4px"></div></div>
<div id="ptree" class="abs">
<div class="ut rt utb" style="width:234px;top:1px">Favorites</div>
<div class="ut rt" style="width:262px;top:17px">All Materials</div>
<div class="ut rt" style="width:251px;top:33px">All Models</div>
<div class="ut rt" style="width:253px;top:49px">All Prefabs</div>
<div class="abs" style="left:0;top:80px;width:152px;height:16px;background:#3e3e3e"></div>
<div class="ut rt utb" style="width:221px;top:81px">Assets</div>
<div class="ut rt" style="width:235px;top:97px">Scenes</div>
<div class="ut rt" style="width:239px;top:113px">Settings</div>
<div class="ut rt utb" style="width:237px;top:129px">Packages</div>
</div>
<div class="abs" style="left:0;top:552px;width:1528px;height:1px;background:#1f1f1f"></div>
<div class="abs" style="left:152px;top:552px;width:1px;height:333px;background:#1c1c1c"></div>
<div id="pgrid" class="abs">
  <div class="abs" style="left:0;top:1px;width:1375px;height:21px;background:#333"></div>
  <div class="abs" style="left:0;top:321px;width:1375px;height:20px;background:#333"></div>
  <div class="abs" style="left:1px;top:0;width:1374px;height:333px">
  <div class="ut utb" style="left:3px;top:3px">Assets</div>
  <svg class="abs" style="left:4px;top:327px" width="13" height="10" viewBox="0 0 13 10"><path d="M1,0 H4.6 L6,1.8 H11.6 Q12.6,1.8 12.6,2.8 V10 H0 V1 Q0,0 1,0 Z" fill="#9a9a9a"/></svg>
  <div class="ut" style="left:20px;top:324px;color:#a0a0a0">Assets</div>
  <svg class="abs" style="left:22px;top:44px" width="48" height="41" viewBox="0 0 48 41"><path d="M3.5,0 H18.5 Q20.5,0 21.5,1.6 L25.5,8 H44.5 Q48,8 48,11.5 V36.5 Q48,40 44.5,40 H3.5 Q0,40 0,36.5 V3.5 Q0,0 3.5,0 Z" fill="#9e9e9e"/></svg>
<div class="lbl" style="left:7px;top:98px">Scenes</div>
<svg class="abs" style="left:98px;top:44px" width="48" height="41" viewBox="0 0 48 41"><path d="M3.5,0 H18.5 Q20.5,0 21.5,1.6 L25.5,8 H44.5 Q48,8 48,11.5 V36.5 Q48,40 44.5,40 H3.5 Q0,40 0,36.5 V3.5 Q0,0 3.5,0 Z" fill="#9e9e9e"/></svg>
<div class="lbl" style="left:83px;top:98px">Settings</div>
<svg class="abs" style="left:174px;top:36px" width="48" height="56" viewBox="0 0 48 56"><path d="M3,0 H37 L48,11 V53 Q48,56 45,56 H3 Q0,56 0,53 V3 Q0,0 3,0 Z" fill="#c4c4c4"/><text x="0" y="47" text-anchor="middle" transform="translate(23.3 0) scale(1.09 1)" style="font-family:'Liberation Sans',sans-serif;font-weight:bold;font-size:47px" fill="#1f6b2a" stroke="#1f6b2a" stroke-width="1.3">#</text></svg>
<div class="lbl" style="left:159px;top:98px">BallControl...</div>
<svg class="abs" style="left:250px;top:36px" width="48" height="56" viewBox="0 0 48 56"><path d="M3,0 H37 L48,11 V53 Q48,56 45,56 H3 Q0,56 0,53 V3 Q0,0 3,0 Z" fill="#c4c4c4"/><text x="0" y="47" text-anchor="middle" transform="translate(23.3 0) scale(1.09 1)" style="font-family:'Liberation Sans',sans-serif;font-weight:bold;font-size:47px" fill="#1f6b2a" stroke="#1f6b2a" stroke-width="1.3">#</text></svg>
<div class="lbl" style="left:235px;top:98px">CameraCo...</div>
<svg class="abs" style="left:326px;top:36px" width="48" height="56" viewBox="0 0 48 56"><path d="M3,0 H37 L48,11 V53 Q48,56 45,56 H3 Q0,56 0,53 V3 Q0,0 3,0 Z" fill="#c4c4c4"/><text x="0" y="47" text-anchor="middle" transform="translate(23.3 0) scale(1.09 1)" style="font-family:'Liberation Sans',sans-serif;font-weight:bold;font-size:47px" fill="#1f6b2a" stroke="#1f6b2a" stroke-width="1.3">#</text></svg>
<div class="lbl" style="left:311px;top:98px">GameClea...</div>
<svg class="abs" style="left:396px;top:34px" width="66" height="62" viewBox="0 0 66 62"><g fill="none" stroke="#63b3dd" stroke-width="4.6" stroke-linejoin="round" stroke-linecap="round"><path d="M24.5,6.4 Q28,4.4 31.5,6.4 L45.5,14.5 Q47.6,15.7 47.6,18.2 V37.6 Q47.6,40.1 45.5,41.3 L31.5,49.9 Q28,51.9 24.5,49.9 L10.4,41.3 Q8.3,40.1 8.3,37.6 V18.2 Q8.3,15.7 10.4,14.5 Z"/><path d="M9.5,16.4 L28,27.5 L46.5,16.4 M28,27.5 V51"/></g><rect x="31.6" y="25.6" width="35" height="37" fill="#292929"/><g fill="#e0602f"><text x="0" y="52.6" transform="translate(32.8 0) scale(1.2 1)" style="font-family:'Liberation Sans',sans-serif;font-weight:bold;font-size:30px">{</text><text x="0" y="52.6" transform="translate(48.8 0) scale(1.2 1)" style="font-family:'Liberation Sans',sans-serif;font-weight:bold;font-size:30px">}</text></g></svg>
<div class="lbl" style="left:387px;top:98px">Readme</div>
<svg class="abs" style="left:472px;top:34px" width="60" height="60" viewBox="0 0 60 60"><rect width="60" height="60" fill="#404040"/><path d="M5.8,14.4 L38.3,19 L38.3,57 L8,50 Z" fill="#393b3d"/><path d="M38.3,19 L52,12.2 L50,48 L38.3,57 Z" fill="#3c3e40"/><path d="M5.8,14.4 L20.2,9.1 L52,12.2 L38.3,19 Z" fill="#585b5e"/></svg>
<svg class="abs" style="left:482px;top:98px" width="12" height="13" viewBox="0 0 12 13"><path d="M6,0.3 L11.6,3.2 L6,6.2 L0.4,3.2 Z" fill="#a6dcf5"/><path d="M0.4,3.2 L6,6.2 V12.7 L0.4,9.6 Z" fill="#5fb4e0"/><path d="M11.6,3.2 L6,6.2 V12.7 L11.6,9.6 Z" fill="#3f8fc0"/></svg>
<div class="lbl" style="left:472px;top:98px">Score</div>
<svg class="abs" style="left:554px;top:36px" width="48" height="56" viewBox="0 0 48 56"><path d="M3,0 H37 L48,11 V53 Q48,56 45,56 H3 Q0,56 0,53 V3 Q0,0 3,0 Z" fill="#c4c4c4"/><text x="0" y="47" text-anchor="middle" transform="translate(23.3 0) scale(1.09 1)" style="font-family:'Liberation Sans',sans-serif;font-weight:bold;font-size:47px" fill="#1f6b2a" stroke="#1f6b2a" stroke-width="1.3">#</text></svg>
<div class="lbl" style="left:539px;top:98px">ScoreMan...</div>
<svg class="abs" style="left:630px;top:36px" width="48" height="56" viewBox="0 0 48 56"><path d="M3,0 H37 L48,11 V53 Q48,56 45,56 H3 Q0,56 0,53 V3 Q0,0 3,0 Z" fill="#c4c4c4"/><text x="0" y="47" text-anchor="middle" transform="translate(23.3 0) scale(1.09 1)" style="font-family:'Liberation Sans',sans-serif;font-weight:bold;font-size:47px" fill="#1f6b2a" stroke="#1f6b2a" stroke-width="1.3">#</text></svg>
<div class="lbl" style="left:615px;top:98px">TitleMana...</div>
<svg class="abs" style="left:700px;top:34px" width="66" height="62" viewBox="0 0 66 62"><g fill="none" stroke="#63b3dd" stroke-width="4.6" stroke-linejoin="round" stroke-linecap="round"><path d="M24.5,6.4 Q28,4.4 31.5,6.4 L45.5,14.5 Q47.6,15.7 47.6,18.2 V37.6 Q47.6,40.1 45.5,41.3 L31.5,49.9 Q28,51.9 24.5,49.9 L10.4,41.3 Q8.3,40.1 8.3,37.6 V18.2 Q8.3,15.7 10.4,14.5 Z"/><path d="M9.5,16.4 L28,27.5 L46.5,16.4 M28,27.5 V51"/></g><rect x="31.6" y="25.6" width="35" height="37" fill="#292929"/><g fill="#e0602f"><text x="0" y="52.6" transform="translate(32.8 0) scale(1.2 1)" style="font-family:'Liberation Sans',sans-serif;font-weight:bold;font-size:30px">{</text><text x="0" y="52.6" transform="translate(48.8 0) scale(1.2 1)" style="font-family:'Liberation Sans',sans-serif;font-weight:bold;font-size:30px">}</text></g></svg>
<div class="lbl" style="left:691px;top:98px">UniversalR...</div>
  </div>
</div>

<div id="insp" class="abs">
  <div class="abs" style="left:0;top:29px;width:44px;height:2px;background:#1c1c1c"></div>
  <div class="abs" style="left:0;top:822px;width:44px;height:2px;background:#1c1c1c"></div>
  <div class="abs" style="left:0;top:844px;width:44px;height:2px;background:#1c1c1c"></div>
  <div class="abs" style="left:0;top:872px;width:44px;height:13px;background:#404040"></div>
  <div class="ut" style="left:0px;top:873px;color:#9a9a9a">ne</div>
</div>
<div id="menu1" class="menu" style="left:949px;top:117px;width:323px;height:594px;border-radius:8px 0 0 8px;">
<div class="hl" style="left:6px;width:314px;top:3px;height:22px"></div>
<div class="mi" style="top:3px"><span class="l" style="left:38px">Create</span></div>
<svg class="chev" style="left:306px;top:9.5px" width="7" height="10" viewBox="0 0 7 10"><polyline points="1.3,1.3 5.3,5 1.3,8.7" fill="none" stroke="#222" stroke-width="1.4"/></svg>
<div class="mi" style="top:25px"><span class="l" style="left:38px">Show in Explorer</span></div>
<div class="mi" style="top:47px"><span class="l" style="left:38px">Open</span></div>
<div class="mi dis" style="top:69px"><span class="l" style="left:38px">Delete</span></div>
<div class="mi dis" style="top:91px"><span class="l" style="left:38px">Rename</span></div>
<div class="mi" style="top:113px"><span class="l" style="left:38px">Copy Path</span><span class="r" style="right:21px">Alt+Ctrl+C</span></div>
<div class="sep" style="left:9px;width:310px;top:139px"></div>
<div class="mi dis" style="top:144px"><span class="l" style="left:38px">Open Scene Additive</span></div>
<div class="sep" style="left:9px;width:310px;top:170px"></div>
<div class="mi dis" style="top:175px"><span class="l" style="left:38px">View in Package Manager</span></div>
<div class="sep" style="left:9px;width:310px;top:201px"></div>
<div class="mi" style="top:206px"><span class="l" style="left:38px">Import New Asset...</span></div>
<div class="mi" style="top:228px"><span class="l" style="left:38px">Import Package</span></div>
<svg class="chev" style="left:306px;top:234.5px" width="7" height="10" viewBox="0 0 7 10"><polyline points="1.3,1.3 5.3,5 1.3,8.7" fill="none" stroke="#222" stroke-width="1.4"/></svg>
<div class="mi" style="top:250px"><span class="l" style="left:38px">Export Package...</span></div>
<div class="mi dis" style="top:272px"><span class="l" style="left:38px;letter-spacing:-0.36px">Find References In Scene</span></div>
<div class="mi" style="top:294px"><span class="l" style="left:38px;letter-spacing:-0.27px">Find References In Project</span></div>
<div class="mi" style="top:316px"><span class="l" style="left:38px;letter-spacing:-0.25px">Select Dependencies</span></div>
<div class="sep" style="left:9px;width:310px;top:342px"></div>
<div class="mi" style="top:347px"><span class="l" style="left:38px">Refresh</span><span class="r" style="right:21px">Ctrl+R</span></div>
<div class="mi" style="top:369px"><span class="l" style="left:38px">Reimport</span></div>
<div class="sep" style="left:9px;width:310px;top:395px"></div>
<div class="mi" style="top:400px"><span class="l" style="left:38px">Reimport All</span></div>
<div class="sep" style="left:9px;width:310px;top:426px"></div>
<div class="mi dis" style="top:431px"><span class="l" style="left:38px">Extract From Prefab</span></div>
<div class="sep" style="left:9px;width:310px;top:457px"></div>
<div class="mi" style="top:462px"><span class="l" style="left:38px;letter-spacing:-0.32px">Update UXML Schema</span></div>
<div class="sep" style="left:9px;width:310px;top:488px"></div>
<div class="mi" style="top:493px"><span class="l" style="left:38px">Generate Lighting</span><span class="r" style="right:21px">Ctrl+Shift+L</span></div>
<div class="mi" style="top:515px"><span class="l" style="left:38px">Open C# Project</span></div>
<div class="mi" style="top:537px"><span class="l" style="left:38px;letter-spacing:0.12px">View in Import Activity Window</span></div>
<div class="sep" style="left:9px;width:310px;top:563px"></div>
<div class="mi" style="top:568px"><span class="l" style="left:38px">Properties...</span><span class="r" style="right:21px">Alt+P</span></div>
</div>
<div id="menu2" class="menu m2" style="left:1271px;top:-10px;width:257px;height:900px;">
<div class="mi" style="top:1px"><span class="l" style="left:38px">Shader Graph</span></div>
<svg class="chev" style="left:235px;top:7.5px" width="7" height="10" viewBox="0 0 7 10"><polyline points="1.3,1.3 5.3,5 1.3,8.7" fill="none" stroke="#222" stroke-width="1.4"/></svg>
<div class="mi" style="top:23px"><span class="l" style="left:38px">Shader</span></div>
<svg class="chev" style="left:235px;top:29.5px" width="7" height="10" viewBox="0 0 7 10"><polyline points="1.3,1.3 5.3,5 1.3,8.7" fill="none" stroke="#222" stroke-width="1.4"/></svg>
<div class="mi" style="top:45px"><span class="l" style="left:38px">Shader Variant Collection</span></div>
<div class="mi" style="top:67px"><span class="l" style="left:38px">Testing</span></div>
<svg class="chev" style="left:235px;top:73.5px" width="7" height="10" viewBox="0 0 7 10"><polyline points="1.3,1.3 5.3,5 1.3,8.7" fill="none" stroke="#222" stroke-width="1.4"/></svg>
<div class="mi" style="top:89px"><span class="l" style="left:38px">Playables</span></div>
<svg class="chev" style="left:235px;top:95.5px" width="7" height="10" viewBox="0 0 7 10"><polyline points="1.3,1.3 5.3,5 1.3,8.7" fill="none" stroke="#222" stroke-width="1.4"/></svg>
<div class="mi" style="top:111px"><span class="l" style="left:38px">Assembly Definition</span></div>
<div class="mi" style="top:133px"><span class="l" style="left:38px">Assembly Definition Reference</span></div>
<div class="mi" style="top:155px"><span class="l" style="left:38px">TextMeshPro</span></div>
<svg class="chev" style="left:235px;top:161.5px" width="7" height="10" viewBox="0 0 7 10"><polyline points="1.3,1.3 5.3,5 1.3,8.7" fill="none" stroke="#222" stroke-width="1.4"/></svg>
<div class="mi" style="top:177px"><span class="l" style="left:38px">Text</span></div>
<svg class="chev" style="left:235px;top:183.5px" width="7" height="10" viewBox="0 0 7 10"><polyline points="1.3,1.3 5.3,5 1.3,8.7" fill="none" stroke="#222" stroke-width="1.4"/></svg>
<div class="sep" style="left:9px;width:239px;top:203px"></div>
<div class="mi" style="top:208px"><span class="l" style="left:38px">Scene</span></div>
<div class="mi" style="top:230px"><span class="l" style="left:38px">Scene Template</span></div>
<div class="mi dis" style="top:252px"><span class="l" style="left:38px;letter-spacing:-0.43px">Scene Template From Scene</span></div>
<div class="mi" style="top:274px"><span class="l" style="left:38px">Volume Profile</span></div>
<div class="mi" style="top:296px"><span class="l" style="left:38px">Scene Template Pipeline</span></div>
<div class="mi" style="top:318px"><span class="l" style="left:38px">Prefab</span></div>
<div class="mi dis" style="top:340px"><span class="l" style="left:38px">Prefab Variant</span></div>
<div class="sep" style="left:9px;width:239px;top:366px"></div>
<div class="mi" style="top:371px"><span class="l" style="left:38px">Audio Mixer</span></div>
<div class="sep" style="left:9px;width:239px;top:397px"></div>
<div class="hl" style="left:7px;width:244px;top:402px;height:22px"></div>
<div class="mi" style="top:402px"><span class="l" style="left:38px">Material</span></div>
<div class="mi dis" style="top:424px"><span class="l" style="left:38px">Material Variant</span></div>
<div class="mi" style="top:446px"><span class="l" style="left:38px">Lens Flare</span></div>
<div class="mi" style="top:468px"><span class="l" style="left:38px">Lens Flare (SRP)</span></div>
<div class="mi" style="top:490px"><span class="l" style="left:38px">Render Texture</span></div>
<div class="mi" style="top:512px"><span class="l" style="left:38px">Lightmap Parameters</span></div>
<div class="mi" style="top:534px"><span class="l" style="left:38px">Lighting Settings</span></div>
<div class="mi" style="top:556px"><span class="l" style="left:38px">Custom Render Texture</span></div>
<div class="sep" style="left:9px;width:239px;top:582px"></div>
<div class="mi" style="top:587px"><span class="l" style="left:38px">Animator Controller</span></div>
<div class="mi" style="top:609px"><span class="l" style="left:38px">Animation</span></div>
<div class="mi" style="top:631px"><span class="l" style="left:38px;letter-spacing:-0.04px">Animator Override Controller</span></div>
<div class="mi" style="top:653px"><span class="l" style="left:38px">Avatar Mask</span></div>
<div class="sep" style="left:9px;width:239px;top:679px"></div>
<div class="mi" style="top:684px"><span class="l" style="left:38px">Timeline</span></div>
<div class="mi" style="top:706px"><span class="l" style="left:38px">Signal</span></div>
<div class="sep" style="left:9px;width:239px;top:732px"></div>
<div class="mi" style="top:737px"><span class="l" style="left:38px">Physic Material</span></div>
<div class="sep" style="left:9px;width:239px;top:763px"></div>
<div class="mi" style="top:768px"><span class="l" style="left:38px">GUI Skin</span></div>
<div class="mi" style="top:790px"><span class="l" style="left:38px">Custom Font</span></div>
<div class="sep" style="left:9px;width:239px;top:816px"></div>
<div class="mi" style="top:821px"><span class="l" style="left:38px">Legacy</span></div>
<svg class="chev" style="left:235px;top:827.5px" width="7" height="10" viewBox="0 0 7 10"><polyline points="1.3,1.3 5.3,5 1.3,8.7" fill="none" stroke="#222" stroke-width="1.4"/></svg>
<div class="mi" style="top:843px"><span class="l" style="left:38px">UI Toolkit</span></div>
<svg class="chev" style="left:235px;top:849.5px" width="7" height="10" viewBox="0 0 7 10"><polyline points="1.3,1.3 5.3,5 1.3,8.7" fill="none" stroke="#222" stroke-width="1.4"/></svg>
<div class="sep" style="left:9px;width:239px;top:869px"></div>
<div class="mi" style="top:874px"><span class="l" style="left:38px">Search</span></div>
<svg class="chev" style="left:235px;top:880.5px" width="7" height="10" viewBox="0 0 7 10"><polyline points="1.3,1.3 5.3,5 1.3,8.7" fill="none" stroke="#222" stroke-width="1.4"/></svg>
</div>
</div>
</body>
</html>
